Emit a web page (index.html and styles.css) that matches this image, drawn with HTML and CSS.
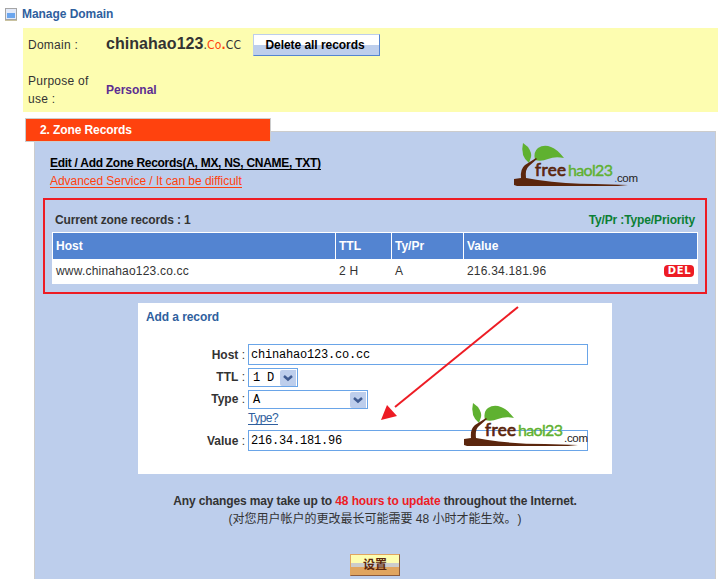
FILE: index.html
```html
<!DOCTYPE html>
<html lang="en">
<head>
<meta charset="utf-8">
<title>Manage Domain</title>
<link rel="stylesheet" href="styles.css">
</head>
<body>
<header class="title-bar">
  <svg class="title-icon" width="12" height="13" viewBox="0 0 12 13">
    <path fill="#a5a5a5" d="M0 0H12V12H0Z"/><path fill="#c9c2a0" d="M0 12H12V13H0Z"/>
    <path fill="#e2e9f8" d="M1 1H11V11H1Z"/><path fill="#6aa5ee" d="M2 5H10V10H2Z"/>
  </svg>
  <h1>Manage Domain</h1>
</header>

<section class="summary">
  <div class="summary-row domain-row">
    <span class="summary-label">Domain :</span>
    <span class="domain"><b>chinahao123</b><span class="tld">.<i>Co<b>.</b></i>CC</span></span>
    <button class="delete-all">Delete all records</button>
  </div>
  <div class="summary-row purpose-row">
    <span class="summary-label purpose-label">Purpose of<br>use :</span>
    <strong class="purpose">Personal</strong>
  </div>
</section>

<main class="zone">
  <h2 class="tab">2. Zone Records</h2>
  <div class="panel">
    <svg class="logo logo-top" width="140" height="60" viewBox="0 0 140 60">
      <path fill="#5fb130" d="M18 8L23 12Q27 18 26 22L24 28Q15 21 18 8Z"/>
      <path fill="#5fb130" d="M30 25Q28 17 33 13Q39 9 46 12Q52 14 59 23Q50 21 43 24Q36 27 30 25Z"/>
      <path fill="#5b260d" d="M31 23L32 24L24 31Q20 34 21 43L33 45Q60 49 90 49L123 50L113 51L12 51L9 50V44L16 43Q15 34 20 30Z"/>
      <text class="logo-word free" x="30" y="41" textLength="31">free</text>
      <text class="logo-word hao" x="63" y="41" textLength="45">haol23</text>
      <text class="logo-com" x="109" y="47" textLength="24"><tspan fill="#3878d0">.</tspan>com</text>
    </svg>
    <div class="links">
      <a class="edit">Edit / Add Zone Records(A, MX, NS, CNAME, TXT)</a>
      <a class="advanced">Advanced Service / It can be difficult</a>
    </div>
    <section class="records">
      <div class="records-head"><b class="count">Current zone records : 1</b><b class="legend">Ty/Pr :Type/Priority</b></div>
      <div class="table">
        <div class="row head"><span>Host</span><span>TTL</span><span>Ty/Pr</span><span>Value</span></div>
        <div class="row data"><span>www.chinahao123.co.cc</span><span>2 H</span><span>A</span><span class="value">216.34.181.96<b class="del">DEL</b></span></div>
      </div>
    </section>
    <form class="add">
      <h3>Add a record</h3>
      <div class="field host"><label><b>Host</b> :</label><div class="box wide">chinahao123.co.cc</div></div>
      <div class="field ttl"><label><b>TTL</b> :</label><div class="box select short">1 D<svg width="16" height="16" viewBox="0 0 16 16"><path fill="#bdceec" d="M2 0H16V16H2Q0 16 0 14V2Q0 0 2 0Z"/><path fill="none" stroke="#3f5b91" stroke-width="2.5" d="M4 6L8 9.5L12 6"/></svg></div></div>
      <div class="field type"><label><b>Type</b> :</label><div class="box select long">A<svg width="16" height="16" viewBox="0 0 16 16"><path fill="#bdceec" d="M2 0H16V16H2Q0 16 0 14V2Q0 0 2 0Z"/><path fill="none" stroke="#3f5b91" stroke-width="2.5" d="M4 6L8 9.5L12 6"/></svg></div></div>
      <div class="help"><a>Type?</a></div>
      <div class="field"><label><b>Value</b> :</label><div class="box wide">216.34.181.96</div></div>
      <svg class="logo logo-form" width="140" height="60" viewBox="0 0 140 60">
        <path fill="#5fb130" d="M18 8L23 12Q27 18 26 22L24 28Q15 21 18 8Z"/>
        <path fill="#5fb130" d="M30 25Q28 17 33 13Q39 9 46 12Q52 14 59 23Q50 21 43 24Q36 27 30 25Z"/>
        <path fill="#5b260d" d="M31 23L32 24L24 31Q20 34 21 43L33 45Q60 49 90 49L123 50L113 51L12 51L9 50V44L16 43Q15 34 20 30Z"/>
        <text class="logo-word free" x="30" y="41" textLength="31">free</text>
        <text class="logo-word hao" x="63" y="41" textLength="45">haol23</text>
        <text class="logo-com" x="109" y="47" textLength="24">.com</text>
      </svg>
      <svg class="arrow" width="150" height="125" viewBox="0 0 150 125">
        <path stroke="#ed1c24" stroke-width="2" d="M140 7L17 107"/><path fill="#ed1c24" d="M3 120L9 105L19 116Z"/>
      </svg>
    </form>
    <p class="notice">Any changes may take up to <em>48 hours to update</em> throughout the Internet.</p>
    <p class="notice-zh" lang="zh-CN">(对您用户帐户的更改最长可能需要 48 小时才能生效。<span class="close">)</span></p>
    <button class="submit" lang="zh-CN">设置</button>
  </div>
</main>
</body>
</html>
```
FILE: styles.css
```css
* { box-sizing: border-box; }
body { margin: 0; width: 718px; height: 579px; overflow: hidden; background: #fff; color: #333; font: 12px/18px "Liberation Sans", "Noto Sans CJK SC", sans-serif; }
h1, h2, h3, p { margin: 0; font-size: 12px; line-height: 18px; }
button { padding: 0; font: bold 12px/18px "Liberation Sans", "Noto Sans CJK SC", sans-serif; border-radius: 0; }

.title-bar { display: flex; height: 28px; padding: 5px 0 0 5px; gap: 5px; }
.title-icon { margin-top: 3px; }
.title-bar h1 { color: #2f5f9e; letter-spacing: -.05px; }

.summary { height: 84px; margin-left: 23px; padding: 5px; background: #fdfdb0; }
.summary-row { display: flex; align-items: center; }
.summary-label { width: 78px; letter-spacing: .25px; }
.domain-row { height: 23px; }
.domain { display: flex; align-items: baseline; width: 147px; white-space: nowrap; }
.domain > b { font-size: 16px; letter-spacing: .05px; }
.tld { font-family: "DejaVu Sans Condensed", "DejaVu Sans", sans-serif; font-size: 12px; letter-spacing: .15px; }
.tld i { color: #ff420e; font-style: normal; }
.delete-all { width: 127px; height: 22px; color: #000; background: linear-gradient(#fff 50%, #bdceec 50%); border: 1px solid; border-color: #bdceec #5384d1 #5384d1 #bdceec; letter-spacing: -.05px; padding-right: 3px; }
.purpose-row { margin-top: 16px; height: 36px; }
.purpose { color: #5c2d91; }

.zone { display: flex; flex-direction: column; padding: 6px 2px 0 25px; }
.tab { position: relative; z-index: 1; width: 246px; height: 24px; padding: 2px 0 0 14px; color: #fff; background: #ff420e; border: 1px solid #ccc; letter-spacing: -.1px; }
.panel { position: relative; height: 460px; margin: -11px 0 0 9px; padding-top: 22px; background: #bdceec; border: 1px solid #ccc; }
.links { display: flex; flex-direction: column; align-items: flex-start; padding-left: 15px; height: 44px; }
.links a { height: 16px; line-height: 18px; border-bottom: 1px solid; margin-bottom: 2px; white-space: nowrap; }
.edit { color: #000; font-weight: bold; letter-spacing: -.28px; }
.advanced { color: #ff420e; letter-spacing: -.04px; }
.logo { position: absolute; }
.logo-top { left: 470px; top: 3px; }
.logo-form { left: 317px; top: 92px; }
.logo-word { font: 17px "Lato", sans-serif; stroke-width: .7px; }
.free { fill: #5b260d; stroke: #5b260d; }
.hao { fill: #5fb130; stroke: #5fb130; font-size: 16px; stroke-width: .4px; }
.logo-com { font: 11.5px "Liberation Sans", sans-serif; fill: #222; }

.records { width: 664px; height: 96px; margin-left: 8px; padding: 11px 7px 0; border: 2px solid #ed1c24; }
.records-head { display: flex; justify-content: space-between; height: 21px; padding: 0 3px; letter-spacing: -.13px; }
.legend { color: #0b7f35; }
.table { width: 646px; height: 52px; background: #fff; padding: 1px 1px 0; }
.row { display: grid; grid-template-columns: 282px 55px 71px 1fr; gap: 1px; height: 25px; }
.row span { padding: 4px 3px; white-space: nowrap; }
.head { font-weight: bold; color: #fff; }
.head span { background: #5384d1; }
.data { letter-spacing: .2px; }
.value { display: flex; justify-content: space-between; align-items: center; }
.del { width: 30px; height: 12px; border-radius: 4px; background: #ed1c24; color: #fff; font: bold 10px/12px "DejaVu Sans", sans-serif; text-align: center; letter-spacing: .7px; padding-left: 1px; }

.add { position: relative; width: 474px; height: 171px; margin: 9px 0 0 103px; padding: 5px 0 0 8px; background: #fff; }
.add h3 { height: 36px; color: #2f5f9e; letter-spacing: -.08px; }
.field { display: flex; align-items: center; }
.field label { width: 99px; margin-right: 3px; text-align: right; }
.host { margin-bottom: 3px; }
.type { margin-top: 3px; }
.ttl, .type { height: 19px; }
.ttl label, .type label { padding-bottom: 2px; }
.box { display: flex; align-items: center; height: 21px; padding: 1px 3px 0 2px; border: 1px solid #6aa5e8; background: #fff; color: #000; font: 12px "Liberation Mono", monospace; letter-spacing: -.2px; white-space: pre; }
.wide { width: 340px; }
.select { height: 19px; padding: 0 1px 0 4px; justify-content: space-between; }
.short { width: 50px; }
.long { width: 120px; }
.help { height: 21px; padding: 1px 0 0 102px; line-height: 14px; }
.help a { display: block; width: 30px; height: 15px; line-height: 16px; color: #2f5f9e; border-bottom: 1px solid; letter-spacing: -.5px; }
.arrow { position: absolute; left: 240px; top: -3px; }
.notice { margin-top: 18px; text-align: center; font-weight: bold; letter-spacing: -.12px; }
.notice em { color: #ed1c24; font-style: normal; }
.notice-zh { text-align: center; text-spacing-trim: space-all; }
.close { padding-left: 1px; }
.submit { display: block; width: 50px; height: 22px; margin: 26px 0 0 315px; color: #5b260d; background: linear-gradient(#fdfdb0 0 40%, #ccc 40% 60%, #e0a560 60%); border: 1px solid; border-color: #e0a560 #8a5a3c #8a5a3c #e0a560; }
```
